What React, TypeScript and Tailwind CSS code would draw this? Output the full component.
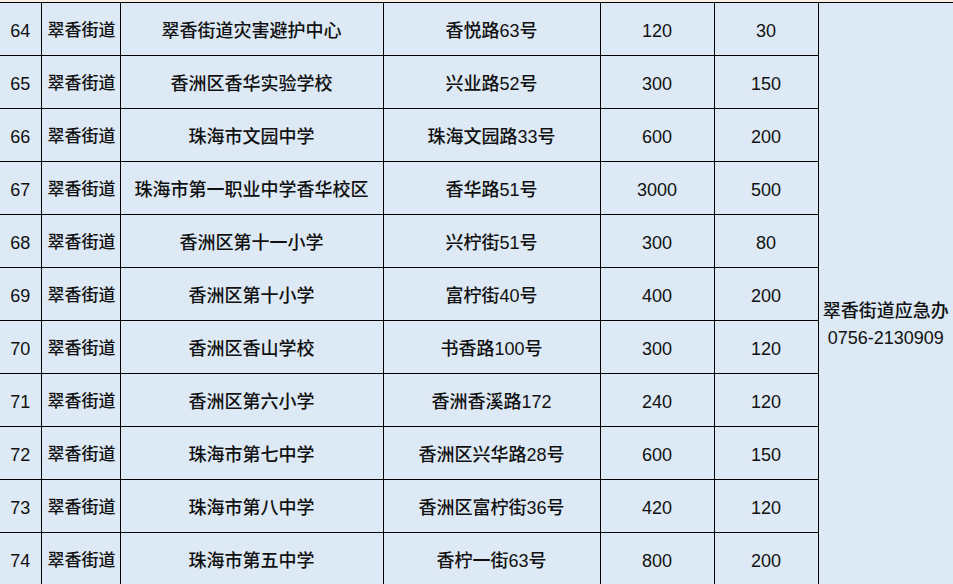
const rows = [
  ["64", "翠香街道灾害避护中心", "香悦路63号", "120", "30"],
  ["65", "香洲区香华实验学校", "兴业路52号", "300", "150"],
  ["66", "珠海市文园中学", "珠海文园路33号", "600", "200"],
  ["67", "珠海市第一职业中学香华校区", "香华路51号", "3000", "500"],
  ["68", "香洲区第十一小学", "兴柠街51号", "300", "80"],
  ["69", "香洲区第十小学", "富柠街40号", "400", "200"],
  ["70", "香洲区香山学校", "书香路100号", "300", "120"],
  ["71", "香洲区第六小学", "香洲香溪路172", "240", "120"],
  ["72", "珠海市第七中学", "香洲区兴华路28号", "600", "150"],
  ["73", "珠海市第八中学", "香洲区富柠街36号", "420", "120"],
  ["74", "珠海市第五中学", "香柠一街63号", "800", "200"],
];

const App = () => {
  return (
    <div
      className="w-[953px] h-[584px] overflow-hidden bg-[#dde9f5] text-[#111111]"
      style={{ fontFamily: '"Liberation Sans", "Noto Sans CJK SC", sans-serif' }}
    >
      <div className="h-[2px] bg-[#fbeee5]" />
      <table className="w-[953px] table-fixed border-collapse">
        <colgroup>
          <col className="w-[41px]" />
          <col className="w-[79px]" />
          <col className="w-[263px]" />
          <col className="w-[217px]" />
          <col className="w-[114px]" />
          <col className="w-[104px]" />
          <col className="w-[135px]" />
        </colgroup>
        <tbody>
          {rows.map((r, i) => (
            <tr key={r[0]} className="h-[53px]">
              <td className="border-t border-r border-black pt-[4px] text-center text-[18px]">{r[0]}</td>
              <td className="border border-black pl-[6px] pt-[4px] text-[17px] font-medium whitespace-nowrap">翠香街道</td>
              <td className="border border-black pt-[4px] text-center text-[18px] font-medium whitespace-nowrap">{r[1]}</td>
              <td className="border border-black pt-[4px] text-center text-[18px] font-medium whitespace-nowrap">{r[2]}</td>
              <td className="border border-black pt-[4px] text-center text-[18px]">{r[3]}</td>
              <td className="border border-black pt-[4px] text-center text-[18px]">{r[4]}</td>
              {i === 0 && (
                <td
                  rowSpan={11}
                  className="border-t border-l border-black align-top pt-[295px] text-center text-[18px] leading-[27px] whitespace-nowrap"
                >
                  <div className="font-medium">翠香街道应急办</div>
                  <div>0756-2130909</div>
                </td>
              )}
            </tr>
          ))}
        </tbody>
      </table>
    </div>
  );
};

export default App;
